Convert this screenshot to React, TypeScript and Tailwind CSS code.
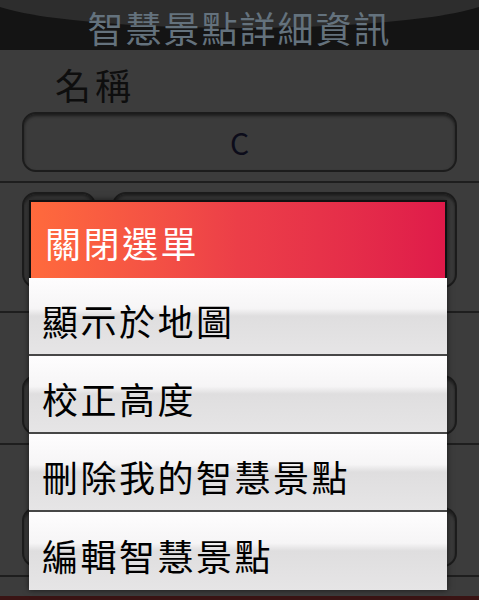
const cjk = { fontFamily: '"Noto Sans CJK TC", "Noto Sans", sans-serif' };

const items = ["顯示於地圖", "校正高度", "刪除我的智慧景點", "編輯智慧景點"];

function InputBox({ text, className }: { text?: string; className?: string }) {
  return (
    <div
      className={
        "flex h-[60px] items-center justify-center rounded-[14px] border-2 border-[#1c1c1c] bg-[#3b3b3b] shadow-[inset_0_2px_3px_rgba(0,0,0,0.5)] " +
        (className ?? "")
      }
    >
      {text && <span className="text-[30px] leading-none text-[#0c0c1a]">{text}</span>}
    </div>
  );
}

export default function App() {
  return (
    <div className="relative flex h-[600px] w-[479px] flex-col overflow-hidden bg-[#3c3c3c]" style={cjk}>
      <header className="relative flex h-[50px] shrink-0 items-center justify-center bg-[#141414]">
        <div className="absolute inset-0 overflow-hidden">
          <div className="absolute left-[-20px] right-[-20px] top-[-40px] h-[68px] rounded-[50%] bg-[#2d2d2d]" />
        </div>
        <h1 className="relative mt-[4px] text-[36px] leading-[40px] tracking-[2px] text-[#64727d]">
          智慧景點詳細資訊
        </h1>
      </header>

      <section className="flex h-[133px] shrink-0 flex-col border-b-2 border-[#1e1e1e] px-[22px] pt-[16px]">
        <span className="pl-[33px] text-[36px] leading-none tracking-[4px] text-[#0e0e0e]">名稱</span>
        <InputBox text="C" className="mt-[10px]" />
      </section>

      <section className="flex h-[130px] shrink-0 gap-[16px] border-b-2 border-[#1e1e1e] px-[22px] pt-[9px]">
        <InputBox className="w-[74px] !h-[96px]" />
        <InputBox className="flex-1 !h-[96px]" />
      </section>

      <section className="flex h-[132px] shrink-0 flex-col justify-end border-b-2 border-[#1e1e1e] px-[22px] pb-[8px]">
        <InputBox />
      </section>

      <section className="flex h-[132px] shrink-0 flex-col justify-end border-b-2 border-[#1e1e1e] px-[22px] pb-[8px]">
        <InputBox />
      </section>

      <div className="flex-1" />
      <div className="h-[4px] shrink-0 bg-[#3a1414]" />

      <div className="absolute left-[29px] top-[200px] w-[418px] shadow-[0_0_6px_rgba(0,0,0,0.6)]">
        <div className="flex h-[78px] items-center border-x-2 border-t-2 border-[#111] bg-gradient-to-r from-[#ff6a3c] via-[#ec3e48] to-[#df1a4a] pl-[14px] pt-[4px]">
          <span className="text-[36px] leading-none tracking-[2.5px] text-white">關閉選單</span>
        </div>
        {items.map((t) => (
          <div
            key={t}
            className="flex h-[78px] items-center border-b-2 border-[#474747] bg-[linear-gradient(to_bottom,#fefdfe_0%,#f6f5f6_40%,#dfdedf_50%,#e6e5e6_100%)] pl-[13px] pt-[8px] last:border-b-0"
          >
            <span className="text-[36px] leading-none tracking-[2.5px] text-black">{t}</span>
          </div>
        ))}
      </div>
    </div>
  );
}
